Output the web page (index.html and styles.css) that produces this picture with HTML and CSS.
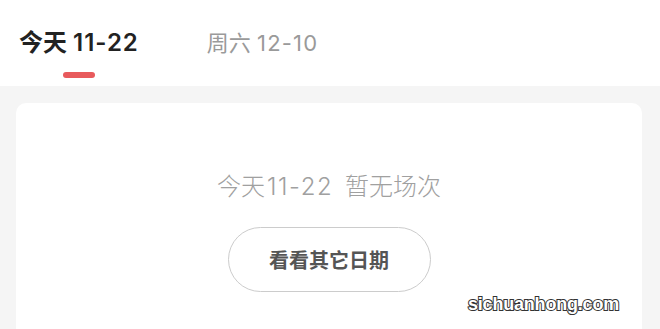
FILE: index.html
```html
<!DOCTYPE html>
<html lang="zh">
<head>
<meta charset="utf-8">
<link rel="stylesheet" href="styles.css">
</head>
<body>
<div class="page">
  <header class="tabs">
    <div class="tab active">
      <span class="tab-label">今天 <span class="num">11-22</span></span>
      <span class="tab-bar"></span>
    </div>
    <div class="tab">
      <span class="tab-label">周六 <span class="num">12-10</span></span>
    </div>
  </header>
  <main class="content">
    <section class="card">
      <p class="empty-text">今天<span class="num">11-22</span> 暂无场次</p>
      <button class="other-btn">看看其它日期</button>
    </section>
  </main>
  <div class="watermark">sichuanhong.com</div>
</div>
</body>
</html>
```

FILE: styles.css
```css
* { box-sizing: border-box; }
html, body { margin: 0; padding: 0; }
body {
  width: 660px;
  height: 329px;
  overflow: hidden;
  background: #f5f5f5;
  font-family: Inter, "Noto Sans CJK SC", sans-serif;
}
.page {
  position: relative;
  height: 329px;
  display: flex;
  flex-direction: column;
}
.tabs {
  background: #fff;
  height: 86px;
  display: flex;
  align-items: flex-start;
  padding: 27px 0 0 19px;
  gap: 68px;
}
.tab {
  display: flex;
  flex-direction: column;
  align-items: center;
}
.tab-label {
  font-size: 22px;
  line-height: 32px;
  color: #9a9a9a;
  white-space: nowrap;
}
.tab-label .num {
  letter-spacing: 1.2px;
}
.tab.active .tab-label {
  font-size: 24px;
  font-weight: 600;
  color: #222;
}
.tab.active .tab-label .num {
  letter-spacing: 1px;
}
.tab-bar {
  margin-top: 13px;
  width: 32px;
  height: 6px;
  border-radius: 3px;
  background: #e85a5c;
}
.content {
  flex: 1;
  padding: 17px 18px 0 16px;
  display: flex;
  flex-direction: column;
}
.card {
  flex: 1;
  background: #fff;
  border-radius: 10px 10px 0 0;
  display: flex;
  flex-direction: column;
  align-items: center;
  padding-top: 68px;
}
.empty-text {
  margin: 0;
  font-size: 24px;
  font-weight: 300;
  line-height: 32px;
  color: #a0a0a0;
  white-space: nowrap;
  word-spacing: 5px;
}
.empty-text .num {
  letter-spacing: 1.6px;
  margin-left: 2px;
}
.other-btn {
  margin-top: 24px;
  width: 203px;
  height: 65px;
  border: 1.5px solid #ccc;
  border-radius: 33px;
  background: #fff;
  font-family: "Noto Sans CJK SC", sans-serif;
  font-size: 20px;
  font-weight: 700;
  color: #555;
  padding: 0;
}
.watermark {
  position: absolute;
  left: 468px;
  top: 294px;
  font-family: "Liberation Sans", sans-serif;
  font-weight: 700;
  font-size: 18px;
  letter-spacing: -0.2px;
  color: #fff;
  -webkit-text-stroke: 2px #333;
  paint-order: stroke fill;
}
```
